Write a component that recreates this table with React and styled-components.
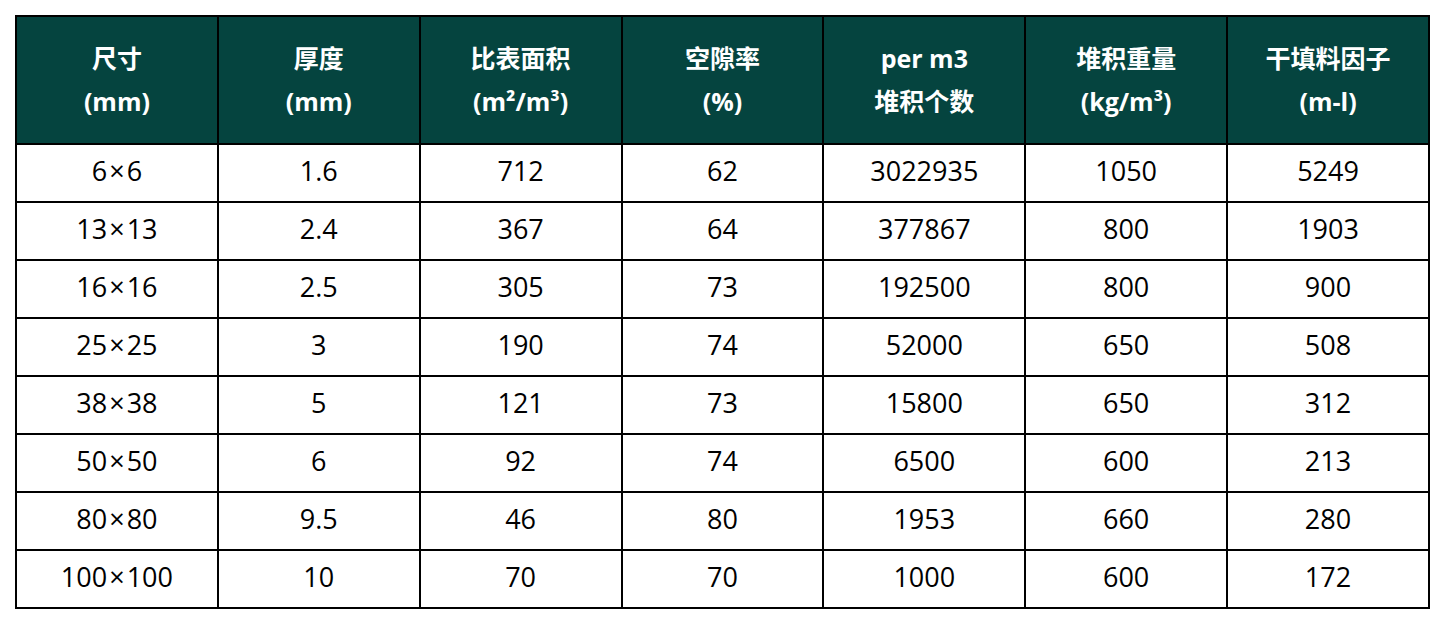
import React from 'react';
import styled, { createGlobalStyle } from 'styled-components';

const GlobalStyle = createGlobalStyle`
    html, body {
        margin: 0;
        padding: 0;
        background: #ffffff;
    }
`;

const Page = styled.div`
    padding: 15px 16px 16px 15px;
`;

const Table = styled.table`
    width: 1415px;
    border-collapse: collapse;
    table-layout: fixed;
    font-family: 'Open Sans', 'Noto Sans CJK SC', sans-serif;
    color: #000000;
`;

const HeadCell = styled.th`
    height: 126px;
    padding: 0;
    background: #05443f;
    color: #ffffff;
    border: 2px solid #000000;
    font-family: 'Open Sans', 'Noto Sans CJK SC', sans-serif;
    font-weight: 700;
    font-size: 25px;
    line-height: 43px;
    text-align: center;
    vertical-align: middle;
`;

const Cell = styled.td`
    height: 52px;
    padding: 0 0 4px;
    border: 2px solid #000000;
    font-size: 27px;
    line-height: 30px;
    text-align: center;
    vertical-align: middle;
`;

const Times = styled.span`
    margin: 0 2px;
`;

const columns = [
    ['尺寸', '(mm)'],
    ['厚度', '(mm)'],
    ['比表面积', '(m²/m³)'],
    ['空隙率', '(%)'],
    ['per m3', '堆积个数'],
    ['堆积重量', '(kg/m³)'],
    ['干填料因子', '(m-l)'],
];

const rows = [
    ['6×6', '1.6', '712', '62', '3022935', '1050', '5249'],
    ['13×13', '2.4', '367', '64', '377867', '800', '1903'],
    ['16×16', '2.5', '305', '73', '192500', '800', '900'],
    ['25×25', '3', '190', '74', '52000', '650', '508'],
    ['38×38', '5', '121', '73', '15800', '650', '312'],
    ['50×50', '6', '92', '74', '6500', '600', '213'],
    ['80×80', '9.5', '46', '80', '1953', '660', '280'],
    ['100×100', '10', '70', '70', '1000', '600', '172'],
];

function renderValue(value) {
    if (!value.includes('×')) return value;

    const [a, b] = value.split('×');

    return (
        <>
            {a}
            <Times>×</Times>
            {b}
        </>
    );
}

export default function App() {
    return (
        <>
            <GlobalStyle />
            <Page>
                <Table>
                    <thead>
                        <tr>
                            {columns.map(([top, bottom], i) => (
                                <HeadCell key={i}>
                                    {top}
                                    <br />
                                    {bottom}
                                </HeadCell>
                            ))}
                        </tr>
                    </thead>
                    <tbody>
                        {rows.map((row, i) => (
                            <tr key={i}>
                                {row.map((value, j) => (
                                    <Cell key={j}>{renderValue(value)}</Cell>
                                ))}
                            </tr>
                        ))}
                    </tbody>
                </Table>
            </Page>
        </>
    );
}
